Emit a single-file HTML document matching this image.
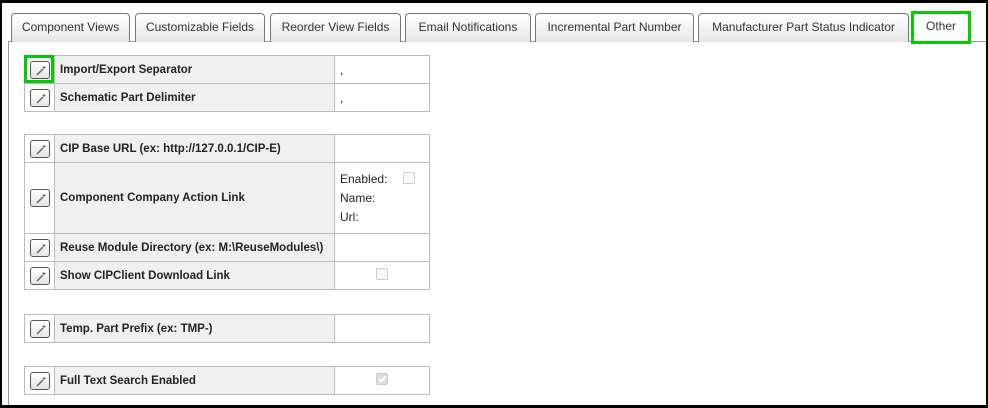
<!DOCTYPE html>
<html><head><meta charset="utf-8"><style>
*{box-sizing:border-box;margin:0;padding:0}
html,body{width:988px;height:408px;overflow:hidden;background:#fff}
body{position:relative;font-family:"Liberation Sans",sans-serif;color:#222}
.frame{position:absolute;left:0;top:0;width:988px;height:408px;border-top:3px solid #000;border-left:2px solid #000;border-right:2px solid #000;border-bottom:3px solid #000;z-index:10;pointer-events:none}
.panel{position:absolute;left:8px;top:41px;width:990px;height:380px;border:1px solid #999}
.tab{position:absolute;top:13px;height:29px;border:1px solid #777;border-bottom:none;border-radius:4px 4px 0 0;background:linear-gradient(#fff,#e6e6e6);font-size:12px;color:#333;text-align:center;line-height:27px}
.tab.sel{background:#fff;height:30px}
.gbox{position:absolute;border:3px solid #0c0;z-index:5}
table{position:absolute;left:24px;width:406px;border-collapse:collapse;font-size:11.5px;font-weight:bold;color:#222}
td{border:1px solid #bbb;height:28px;padding:0}
td.b{width:30px;text-align:center;background:#fff}
td.l{width:280px;background:#f0f0f0;padding-left:5px}
td.v{background:#fff;padding-left:5px;font-weight:normal;font-size:12px}
.btn{display:inline-block;width:20px;height:18px;border:1px solid #555;border-radius:3px;background:linear-gradient(#fff,#e4e4e4);vertical-align:middle;position:relative}
.btn svg{position:absolute;left:4px;top:3px}
.cb{display:inline-block;width:12px;height:12px;border:1px solid #ccc;border-radius:2px;background:#fafafa}
</style></head><body>
<div class="frame"></div>
<div class="panel"></div>
<div class="tab" style="left:11px;width:119px">Component Views</div>
<div class="tab" style="left:135px;width:130px">Customizable Fields</div>
<div class="tab" style="left:270px;width:131px">Reorder View Fields</div>
<div class="tab" style="left:405px;width:126px">Email Notifications</div>
<div class="tab" style="left:535px;width:159px">Incremental Part Number</div>
<div class="tab" style="left:698px;width:211px">Manufacturer Part Status Indicator</div>
<div class="tab sel" style="left:913px;width:56px;top:12px">Other</div>
<div class="gbox" style="left:911px;top:11px;width:60px;height:33px"></div>
<div class="gbox" style="left:24px;top:55px;width:30px;height:28px"></div>

<table style="top:55px">
<tr><td class="b"><span class="btn"><svg width="12" height="11"><path d="M2 10 L8 4" stroke="#666" stroke-width="1.5"/><path d="M9 1 v3 M7.5 2.5 h3" stroke="#666" stroke-width="1"/></svg></span></td><td class="l">Import/Export Separator</td><td class="v">,</td></tr>
<tr><td class="b"><span class="btn"><svg width="12" height="11"><path d="M2 10 L8 4" stroke="#666" stroke-width="1.5"/><path d="M9 1 v3 M7.5 2.5 h3" stroke="#666" stroke-width="1"/></svg></span></td><td class="l">Schematic Part Delimiter</td><td class="v">,</td></tr>
</table>

<table style="top:134px">
<tr><td class="b"><span class="btn"><svg width="12" height="11"><path d="M2 10 L8 4" stroke="#666" stroke-width="1.5"/><path d="M9 1 v3 M7.5 2.5 h3" stroke="#666" stroke-width="1"/></svg></span></td><td class="l">CIP Base URL (ex: http://127.0.0.1/CIP-E)</td><td class="v"></td></tr>
<tr><td class="b" style="height:71px"><span class="btn"><svg width="12" height="11"><path d="M2 10 L8 4" stroke="#666" stroke-width="1.5"/><path d="M9 1 v3 M7.5 2.5 h3" stroke="#666" stroke-width="1"/></svg></span></td><td class="l">Component Company Action Link</td><td class="v" style="line-height:19px;padding-top:0">Enabled: <span class="cb" style="margin-left:12px;vertical-align:-1px"></span><br>Name:<br>Url:</td></tr>
<tr><td class="b"><span class="btn"><svg width="12" height="11"><path d="M2 10 L8 4" stroke="#666" stroke-width="1.5"/><path d="M9 1 v3 M7.5 2.5 h3" stroke="#666" stroke-width="1"/></svg></span></td><td class="l">Reuse Module Directory (ex: M:\ReuseModules\)</td><td class="v"></td></tr>
<tr><td class="b"><span class="btn"><svg width="12" height="11"><path d="M2 10 L8 4" stroke="#666" stroke-width="1.5"/><path d="M9 1 v3 M7.5 2.5 h3" stroke="#666" stroke-width="1"/></svg></span></td><td class="l">Show CIPClient Download Link</td><td class="v" style="text-align:center;padding:0"><span class="cb"></span></td></tr>
</table>

<table style="top:314px">
<tr><td class="b"><span class="btn"><svg width="12" height="11"><path d="M2 10 L8 4" stroke="#666" stroke-width="1.5"/><path d="M9 1 v3 M7.5 2.5 h3" stroke="#666" stroke-width="1"/></svg></span></td><td class="l">Temp. Part Prefix (ex: TMP-)</td><td class="v"></td></tr>
</table>

<table style="top:366px">
<tr><td class="b"><span class="btn"><svg width="12" height="11"><path d="M2 10 L8 4" stroke="#666" stroke-width="1.5"/><path d="M9 1 v3 M7.5 2.5 h3" stroke="#666" stroke-width="1"/></svg></span></td><td class="l">Full Text Search Enabled</td><td class="v" style="text-align:center;padding:0"><span class="cb" style="background:#ddd;position:relative"><svg width="10" height="10" style="position:absolute;left:0;top:0"><path d="M2 5 L4 7.5 L8.5 2.5" stroke="#fff" stroke-width="2" fill="none"/></svg></span></td></tr>
</table>
</body></html>
